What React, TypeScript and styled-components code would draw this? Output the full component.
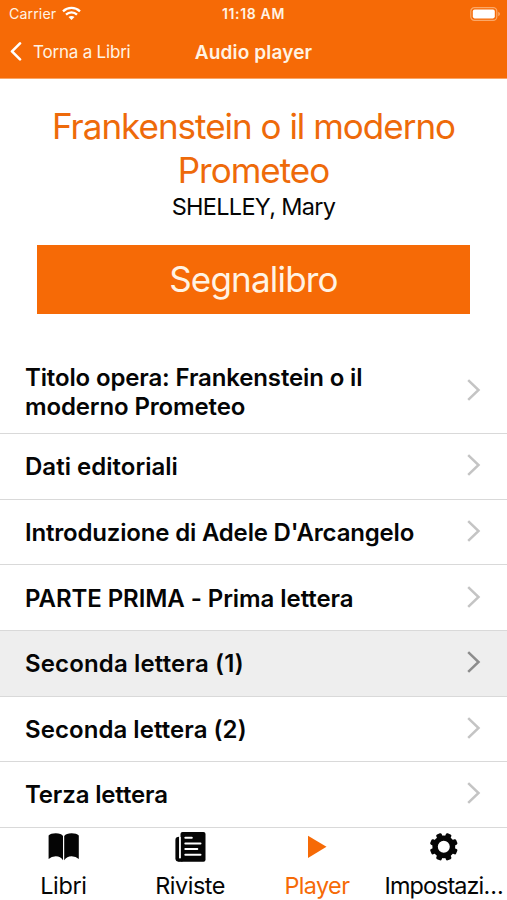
import React from "react";
import styled, { createGlobalStyle } from "styled-components";

const ORANGE = "#f66a06";

const GlobalStyle = createGlobalStyle`
  * { box-sizing: border-box; }
  body { margin: 0; background: #fff; font-family: Inter, "Liberation Sans", sans-serif; color: #050505; }
  svg { display: block; flex: none; }
`;

const Screen = styled.div`
  width: 507px;
  height: 900px;
  display: flex;
  flex-direction: column;
  overflow: hidden;
  background: #fff;
`;

const Header = styled.header`
  height: 79px;
  flex: none;
  background: ${ORANGE};
  border-bottom: 1px solid #f9a566;
  color: #fff3e4;
`;

const Bar = styled.div<{ $height: number }>`
  height: ${(p) => p.$height}px;
  display: grid;
  grid-template-columns: 1fr auto 1fr;
  align-items: center;
`;

const Carrier = styled.div`
  display: flex;
  align-items: center;
  gap: 6px;
  padding-left: 9px;
  font-size: 14.2px;
  line-height: 18px;
  letter-spacing: 0.1px;
`;

const Clock = styled.div`
  font-size: 14px;
  font-weight: 600;
  line-height: 18px;
  letter-spacing: 0.65px;
`;

const Battery = styled.div`
  justify-self: end;
  padding-right: 6px;
`;

const BackButton = styled.button`
  display: flex;
  align-items: center;
  gap: 10px;
  padding: 0 0 0 10px;
  border: 0;
  background: none;
  color: inherit;
  font: 400 17px/22px Inter, sans-serif;
  letter-spacing: -0.2px;
`;

const NavTitle = styled.h1`
  margin: 0;
  padding-top: 1px;
  font-size: 19px;
  font-weight: 600;
  line-height: 24px;
  letter-spacing: 0.15px;
`;

const Intro = styled.section`
  height: 270px;
  flex: none;
  padding: 25px 37px 0;
  text-align: center;
`;

const BookTitle = styled.h2`
  margin: 0;
  color: #ee6a0a;
  font-size: 35px;
  font-weight: 400;
  line-height: 44px;
  letter-spacing: -1px;
`;

const Author = styled.p`
  margin: 0;
  font-size: 23.5px;
  line-height: 29px;
  letter-spacing: -0.7px;
`;

const BookmarkButton = styled.button`
  display: block;
  width: 433px;
  height: 69px;
  margin: 24px 0 0;
  padding: 0 0 1px;
  border: 0;
  background: ${ORANGE};
  color: #fff3e4;
  font: 400 35px/44px Inter, sans-serif;
  letter-spacing: -0.8px;
`;

const ChapterList = styled.ul`
  flex: 1;
  margin: 0;
  padding: 0;
  list-style: none;
`;

const ChapterRow = styled.li<{ $tall?: boolean; $active?: boolean }>`
  height: ${(p) => (p.$tall ? 85.2 : 65.6)}px;
  display: flex;
  align-items: center;
  justify-content: space-between;
  padding: 0 26px 1px 25px;
  border-bottom: 1.6px solid #d9d9d9;
  background: ${(p) => (p.$active ? "#eeeeee" : "#fff")};
  color: ${(p) => (p.$active ? "#8c8c8c" : "#c4c4c4")};

  svg {
    margin-bottom: 1px;
  }
`;

const ChapterName = styled.span<{ $tracking: number; $tall?: boolean }>`
  max-width: 400px;
  padding-top: ${(p) => (p.$tall ? 3 : 2)}px;
  color: #050505;
  font-size: 24px;
  font-weight: 600;
  line-height: 29px;
  letter-spacing: ${(p) => p.$tracking}px;
  white-space: pre-line;
`;

const TabBar = styled.nav`
  height: 73px;
  flex: none;
  display: grid;
  grid-template-columns: repeat(4, 1fr);
  background: #fff;
`;

const Tab = styled.a<{ $active?: boolean }>`
  display: flex;
  flex-direction: column;
  align-items: center;
  padding-top: 3px;
  color: ${(p) => (p.$active ? ORANGE : "#050505")};
`;

const TabLabel = styled.span<{ $tracking: number }>`
  margin-top: 8px;
  font-size: 23.4px;
  line-height: 29px;
  white-space: nowrap;
  letter-spacing: ${(p) => p.$tracking}px;
`;

const WifiIcon = () => (
  <svg width="19" height="15" viewBox="0 0 19 15" fill="none" stroke="#fff" strokeWidth="2.3">
    <path d="M1 5.3C5.8.7 13.2.7 18 5.3" />
    <path d="M4 8.6c3.1-3 7.9-3 11 0" />
    <path d="M9.5 14 6.5 11c1.7-1.5 4.3-1.5 6 0z" fill="#fff" stroke="none" />
  </svg>
);

const BatteryIcon = () => (
  <svg width="31" height="14" viewBox="0 0 31 14">
    <rect x="0.8" y="0.7" width="26" height="12.6" rx="3.6" fill="none" stroke="#fba868" strokeWidth="1.2" />
    <rect x="2.8" y="2.6" width="22" height="8.8" rx="1.8" fill="#fff" />
    <path d="M28.2 4.8v4.4c2.4-.8 2.4-3.6 0-4.4z" fill="#fba868" />
  </svg>
);

const BackIcon = () => (
  <svg width="13" height="20" viewBox="0 0 13 20" fill="none" stroke="#fff" strokeWidth="2.6" strokeLinecap="round" strokeLinejoin="round">
    <path d="M10 1.4 2 9.4l8 8" />
  </svg>
);

const ChevronIcon = () => (
  <svg width="14" height="22" viewBox="0 0 14 22" fill="none" stroke="currentColor" strokeWidth="2.5">
    <path d="M1.2 1.2 11.5 11 1.2 20.8" />
  </svg>
);

const BookIcon = () => (
  <svg width="32" height="32" viewBox="0 0 32 32" fill="currentColor">
    <path d="M1.6 4.6Q3.8 2.2 8.8 2.2 14.2 2.2 16 5V29.2Q13.6 25.2 8.8 25.2 4.4 25.2 1.6 28z" />
    <path d="M31.8 4.6Q29.6 2.2 24.6 2.2 19.2 2.2 17.2 5V29.2Q19.8 25.2 24.6 25.2 29 25.2 31.8 28z" />
  </svg>
);

const NewsIcon = () => (
  <svg width="32" height="32" viewBox="0 0 32 32" fill="none">
    <path d="M5.2 5.7Q1.4 5.7 1.4 9V27.3Q1.4 30.8 5.2 30.8z" fill="currentColor" />
    <rect x="6.5" y="1" width="25" height="29.8" rx="2" fill="currentColor" />
    <path d="M4.5 27.2h4v3.6h-4z" fill="currentColor" />
    <path d="M6 6v21.2" stroke="#fff" strokeWidth="1.6" />
    <path d="M11.3 6.8h6.5M11.3 12.4h15.2M11.3 18h12M11.3 23.8h15.2" stroke="#fff" strokeWidth="2" strokeLinecap="round" />
  </svg>
);

const PlayIcon = () => (
  <svg width="32" height="32" viewBox="0 0 32 32" fill="currentColor">
    <path d="M7 4.7 25.5 15.8 7 27z" />
  </svg>
);

const TOOTH_ANGLES = [22.5, 67.5, 112.5, 157.5, 202.5, 247.5, 292.5, 337.5];

const GearIcon = () => (
  <svg width="32" height="32" viewBox="0 0 32 32" fill="currentColor">
    <circle cx="15.8" cy="15.8" r="8.7" fill="none" stroke="currentColor" strokeWidth="5.4" />
    {TOOTH_ANGLES.map((angle) => (
      <rect key={angle} x="12.9" y="1.8" width="5.8" height="6" rx="1.4" transform={`rotate(${angle} 15.8 15.8)`} />
    ))}
  </svg>
);

const chapters = [
  { name: "Titolo opera: Frankenstein o il\nmoderno Prometeo", tall: true, tracking: -0.14 },
  { name: "Dati editoriali", tracking: 0.02 },
  { name: "Introduzione di Adele D'Arcangelo", tracking: -0.18 },
  { name: "PARTE PRIMA - Prima lettera", tracking: -0.07 },
  { name: "Seconda lettera (1)", active: true, tracking: 0.15 },
  { name: "Seconda lettera (2)", tracking: 0.06 },
  { name: "Terza lettera", tracking: -0.15 },
];

const tabs = [
  { label: "Libri", Icon: BookIcon, tracking: -0.35 },
  { label: "Riviste", Icon: NewsIcon, tracking: -0.45 },
  { label: "Player", Icon: PlayIcon, tracking: -0.6, active: true },
  { label: "Impostazi…", Icon: GearIcon, tracking: -0.9 },
];

export default function App() {
  return (
    <Screen>
      <GlobalStyle />
      <Header>
        <Bar $height={27}>
          <Carrier>
            Carrier
            <WifiIcon />
          </Carrier>
          <Clock>11:18 AM</Clock>
          <Battery>
            <BatteryIcon />
          </Battery>
        </Bar>
        <Bar $height={50}>
          <BackButton>
            <BackIcon />
            Torna a Libri
          </BackButton>
          <NavTitle>Audio player</NavTitle>
        </Bar>
      </Header>
      <Intro>
        <BookTitle>Frankenstein o il moderno Prometeo</BookTitle>
        <Author>SHELLEY, Mary</Author>
        <BookmarkButton>Segnalibro</BookmarkButton>
      </Intro>
      <ChapterList>
        {chapters.map((c) => (
          <ChapterRow key={c.name} $tall={c.tall} $active={c.active}>
            <ChapterName $tall={c.tall} $tracking={c.tracking}>
              {c.name}
            </ChapterName>
            <ChevronIcon />
          </ChapterRow>
        ))}
      </ChapterList>
      <TabBar>
        {tabs.map(({ label, Icon, tracking, active }) => (
          <Tab key={label} $active={active}>
            <Icon />
            <TabLabel $tracking={tracking}>{label}</TabLabel>
          </Tab>
        ))}
      </TabBar>
    </Screen>
  );
}
